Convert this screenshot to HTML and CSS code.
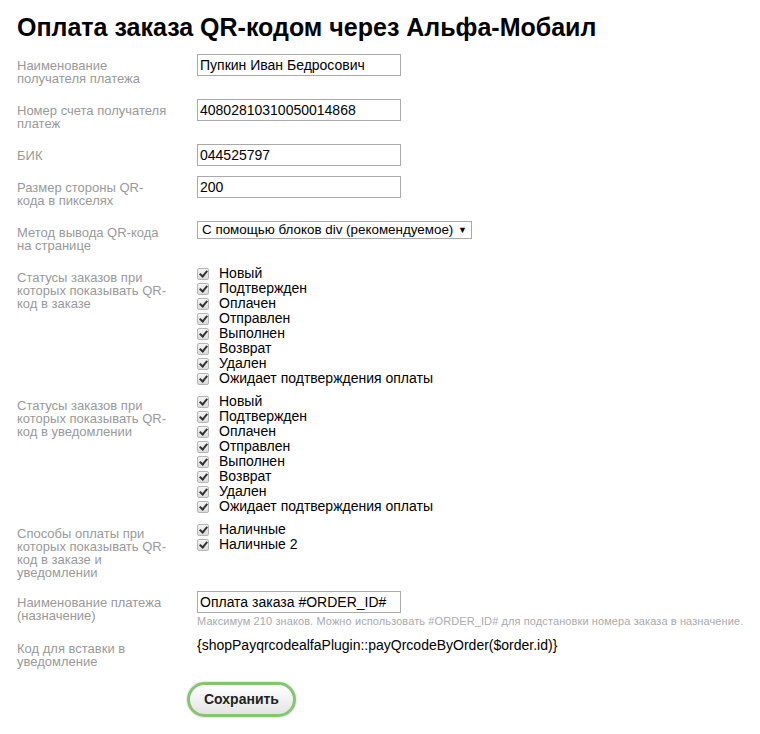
FILE: index.html
```html
<!DOCTYPE html>
<html lang="ru">
<head>
    <meta charset="UTF-8">
    <title>Оплата заказа QR-кодом через Альфа-Мобаил</title>
    <link rel="stylesheet" href="styles.css">
</head>
<body>
    <div class="container">
        <h1>Оплата заказа QR-кодом через Альфа-Мобаил</h1>

        <form class="settings">
            <div class="field">
                <div class="name">Наименование получателя платежа</div>
                <div class="value"><input type="text" class="text" value="Пупкин Иван Бедросович"></div>
            </div>
            <div class="field">
                <div class="name">Номер счета получателя платеж</div>
                <div class="value"><input type="text" class="text" value="40802810310050014868"></div>
            </div>
            <div class="field">
                <div class="name">БИК</div>
                <div class="value"><input type="text" class="text" value="044525797"></div>
            </div>
            <div class="field">
                <div class="name">Размер стороны QR-кода в пикселях</div>
                <div class="value"><input type="text" class="text" value="200"></div>
            </div>
            <div class="field">
                <div class="name">Метод вывода QR-кода на странице</div>
                <div class="value">
                    <div class="select">С помощью блоков div (рекомендуемое)<span class="arrow">▼</span></div>
                </div>
            </div>
            <div class="field list">
                <div class="name">Статусы заказов при которых показывать QR-код в заказе</div>
                <div class="value">
                    <label class="check"><span class="box"></span>Новый</label>
                    <label class="check"><span class="box"></span>Подтвержден</label>
                    <label class="check"><span class="box"></span>Оплачен</label>
                    <label class="check"><span class="box"></span>Отправлен</label>
                    <label class="check"><span class="box"></span>Выполнен</label>
                    <label class="check"><span class="box"></span>Возврат</label>
                    <label class="check"><span class="box"></span>Удален</label>
                    <label class="check"><span class="box"></span>Ожидает подтверждения оплаты</label>
                </div>
            </div>
            <div class="field list">
                <div class="name">Статусы заказов при которых показывать QR-код в уведомлении</div>
                <div class="value">
                    <label class="check"><span class="box"></span>Новый</label>
                    <label class="check"><span class="box"></span>Подтвержден</label>
                    <label class="check"><span class="box"></span>Оплачен</label>
                    <label class="check"><span class="box"></span>Отправлен</label>
                    <label class="check"><span class="box"></span>Выполнен</label>
                    <label class="check"><span class="box"></span>Возврат</label>
                    <label class="check"><span class="box"></span>Удален</label>
                    <label class="check"><span class="box"></span>Ожидает подтверждения оплаты</label>
                </div>
            </div>
            <div class="field list">
                <div class="name">Способы оплаты при которых показывать QR-код в заказе и уведомлении</div>
                <div class="value">
                    <label class="check"><span class="box"></span>Наличные</label>
                    <label class="check"><span class="box"></span>Наличные 2</label>
                </div>
            </div>
            <div class="field">
                <div class="name">Наименование платежа (назначение)</div>
                <div class="value">
                    <input type="text" class="text" value="Оплата заказа #ORDER_ID#">
                    <div class="hint">Максимум 210 знаков. Можно использовать #ORDER_ID# для подстановки номера заказа в назначение.</div>
                </div>
            </div>
            <div class="field">
                <div class="name">Код для вставки в уведомление</div>
                <div class="value"><div class="code">{shopPayqrcodealfaPlugin::payQrcodeByOrder($order.id)}</div></div>
            </div>
            <div class="buttons">
                <button type="submit">Сохранить</button>
            </div>
        </form>
    </div>
</body>
</html>
```

FILE: styles.css
```css
/* Общие стили */
body {
    font-family: 'Liberation Sans', Arial, sans-serif;
    margin: 0;
    padding: 0;
    background: #fff;
    color: #000;
}

.container {
    padding: 12px 17px 20px;
}

h1 {
    font-size: 25px;
    line-height: 30px;
    margin: 0 0 12px;
}

.field {
    display: flex;
    margin-bottom: 10px;
}

.field.list {
    margin-bottom: 8px;
}

.name {
    flex-shrink: 0;
    width: 152px;
    margin-right: 28px;
    padding: 5px 0 4px;
    font-size: 13px;
    line-height: 13px;
    color: #999;
}

.value {
    flex: 1;
    font-size: 14px;
}

input.text {
    width: 204px;
    height: 22px;
    box-sizing: border-box;
    border: 1px solid #a9a9a9;
    padding: 0 2px;
    margin: 0;
    font-family: inherit;
    font-size: 14px;
    color: #000;
}

.select {
    width: 275px;
    height: 18px;
    box-sizing: border-box;
    border: 1px solid #a9a9a9;
    padding: 0 4px;
    font-size: 13.4px;
    line-height: 16px;
    position: relative;
}

.select .arrow {
    position: absolute;
    right: 4px;
    top: 0;
    font-size: 9px;
}

.check {
    display: flex;
    align-items: center;
    height: 15px;
    line-height: 15px;
}

.check .box {
    width: 10px;
    height: 10px;
    border: 1px solid #b5b5b5;
    border-radius: 2px;
    background: linear-gradient(#f4f4f4, #dcdcdc);
    margin-right: 10px;
    position: relative;
}

.check .box::after {
    content: "";
    position: absolute;
    left: 3px;
    top: 0;
    width: 3px;
    height: 6px;
    border: solid #333;
    border-width: 0 2px 2px 0;
    transform: rotate(40deg);
}

.hint {
    font-size: 11px;
    line-height: 12px;
    letter-spacing: 0.1px;
    white-space: nowrap;
    color: #aaa;
    margin-top: 2px;
}

.code {
    font-size: 14px;
    line-height: 16px;
}

.buttons {
    padding: 0 0 0 170px;
}

button {
    padding: 6px 14px 7px;
    background: linear-gradient(#ffffff, #e4e4e4);
    color: #222;
    border: 3px solid #86c471;
    border-radius: 18px;
    font-family: inherit;
    font-size: 14px;
    font-weight: bold;
    box-shadow: 0 0 2px rgba(0, 0, 0, 0.3);
    cursor: pointer;
}
```
